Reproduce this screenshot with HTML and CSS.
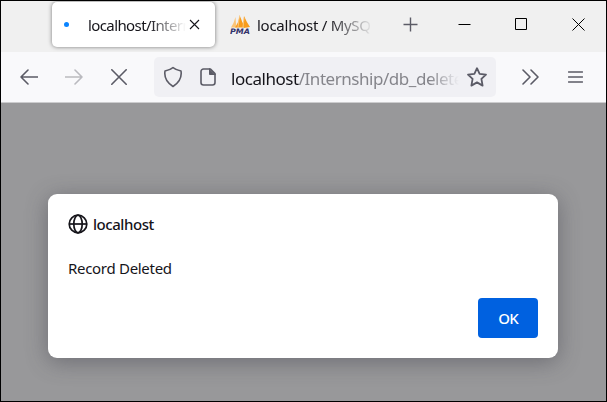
FILE: index.html
```html
<!DOCTYPE html>
<html lang="en">
<head>
<meta charset="utf-8">
<title>localhost</title>
<link rel="stylesheet" href="styles.css">
</head>
<body>
<div class="window">
  <header class="tabbar">
    <div class="tab tab-active">
      <span class="loading"></span>
      <span class="tab-title title-active">localhost/Intern</span>
      <svg class="tab-close" width="11" height="11" viewBox="0 0 11 11"><path d="M1 1l9 9M10 1l-9 9"/></svg>
    </div>
    <div class="tab tab-idle">
      <svg class="pma" width="21" height="20" viewBox="0 0 21 20">
        <path class="sail-light" d="M1 12.500Q4 8 5.500 2Q5.500 8 7 12.500Z"/>
        <path class="sail" d="M5 12.500Q9 7 9.500 0Q12 5 13.500 12.500Z"/>
        <path class="sail" d="M11.500 10Q14 6 14 1Q17 8 20 12L14 13Z"/>
        <path class="sail-gap" d="M9.500 1L8 12M14 3L13 12"/>
        <text x="0" y="19.300" textLength="20" lengthAdjust="spacingAndGlyphs">PMA</text>
      </svg>
      <span class="tab-title title-idle">localhost / MySQ</span>
    </div>
    <svg class="new-tab" width="16" height="16" viewBox="0 0 16 16"><path d="M7.500 .5v14M.5 7.500h14"/></svg>
    <div class="controls">
      <svg width="13" height="13" viewBox="0 0 13 13"><path d="M.5 6.500h12"/></svg>
      <svg width="13" height="13" viewBox="0 0 13 13"><path d="M.5 .5h11v11H.5z"/></svg>
      <svg width="13" height="13" viewBox="0 0 13 13"><path d="M.5 .5l12 12M12.500 .5l-12 12"/></svg>
    </div>
  </header>
  <nav class="toolbar">
    <svg class="icon back" width="18" height="16" viewBox="0 0 18 16"><path d="M17.500 8H1M8 1L1 8l7 7"/></svg>
    <svg class="icon forward" width="18" height="16" viewBox="0 0 18 16"><path d="M.5 8H17M10 1l7 7-7 7"/></svg>
    <svg class="icon stop" width="16" height="16" viewBox="0 0 16 16"><path d="M.8 .8l14.400 14.400M15.200 .8L.8 15.200"/></svg>
    <div class="address">
      <svg class="icon shield" width="20" height="22" viewBox="0 0 20 22"><path d="M10 1.500Q12 3.300 18 5Q19.500 14.500 10 20.500Q.5 14.500 2 5Q8 3.300 10 1.500Z"/></svg>
      <svg class="icon page" width="16" height="18" viewBox="0 0 16 18"><path d="M3.500 1h7L15 5.500v9a2.500 2.500 0 0 1-2.500 2.500h-9A2.500 2.500 0 0 1 1 14.500v-11A2.500 2.500 0 0 1 3.500 1z"/><path class="fold" d="M9.500 1v5.500H15z"/></svg>
      <div class="url"><span class="host">localhost</span><span class="path">/Internship/db_delete</span></div>
      <svg class="icon star" width="22" height="20" viewBox="0 0 22 20"><path d="M11 1.200l2.600 5.700 6.400.8-4.600 4.200 1.200 6.700L11 15.400l-5.600 3.200 1.200-6.700L2 7.700l6.400-.8z"/></svg>
    </div>
    <svg class="icon more" width="17" height="16" viewBox="0 0 17 16"><path d="M1 1l7 7-7 7M9 1l7 7-7 7"/></svg>
    <svg class="icon menu" width="15" height="12" viewBox="0 0 15 12"><path d="M.5 1h14M.5 6h14M.5 11h14"/></svg>
  </nav>
  <main class="page-area">
    <section class="dialog" role="alertdialog">
      <div class="origin">
        <svg width="20" height="20" viewBox="0 0 20 20"><circle cx="10" cy="10" r="8.800"/><ellipse cx="10" cy="10" rx="4.200" ry="8.800"/><path d="M1.200 10h17.600"/></svg>
        <span class="origin-name">localhost</span>
      </div>
      <p class="message">Record Deleted</p>
      <button class="ok">OK</button>
    </section>
  </main>
</div>
</body>
</html>
```
FILE: styles.css
```css
* { box-sizing: border-box; }
body {
  margin: 0;
  overflow: hidden;
  font-family: "Noto Sans", "Open Sans", sans-serif;
  color: #15141a;
}
svg { display: block; flex: none; fill: none; }
.window {
  width: 607px;
  height: 402px;
  display: flex;
  flex-direction: column;
  border: 1px solid #000;
}
.tabbar {
  height: 51px;
  flex: none;
  display: flex;
  align-items: flex-start;
  background: #f0f0f0;
}
.tab { display: flex; align-items: center; height: 45px; margin-top: 1px; }
.tab-active {
  width: 163px;
  margin-left: 51px;
  padding-left: 12px;
  background: #fff;
  border-radius: 5px;
  box-shadow: 0 0 4px rgba(0, 0, 0, .5);
}
.loading { width: 5px; height: 5px; border-radius: 50%; background: #0a84ff; }
.tab-title {
  white-space: nowrap;
  font-size: 15px;
  line-height: 24px;
}
.title-active {
  width: 98px;
  margin-left: 19px;
  letter-spacing: -.6px;
  -webkit-mask-image: linear-gradient(to right, #000 62%, transparent);
  mask-image: linear-gradient(to right, #000 62%, transparent);
}
.tab-close { margin-left: 3px; stroke: #15141a; stroke-width: 1.1; }
.tab-idle { width: 161px; padding-left: 15px; }
.title-idle {
  width: 116px;
  margin-left: 6px;
  letter-spacing: -.26px;
  -webkit-mask-image: linear-gradient(to right, #000 62%, transparent);
  mask-image: linear-gradient(to right, #000 62%, transparent);
}
.pma .sail { fill: #f89c1c; }
.pma .sail-light { fill: #fbc477; }
.pma .sail-gap { stroke: #fbd7a3; stroke-width: .7; }
.pma text { fill: #33336b; font: italic bold 7.5px "DejaVu Sans", sans-serif; }
.new-tab { margin: 16px 0 0 27px; stroke: #5b5b66; stroke-width: 1.4; }
.controls {
  display: flex;
  gap: 44px;
  margin: 17px 0 0 39px;
  stroke: #000;
  stroke-width: 1;
}
.toolbar {
  height: 51px;
  flex: none;
  display: flex;
  align-items: center;
  padding-left: 19px;
  background: #f9f9fb;
  border-bottom: 1px solid #ccccce;
}
.icon { stroke: #5b5b66; stroke-width: 1.6; stroke-linecap: round; stroke-linejoin: round; }
.forward { margin-left: 27px; stroke: #bababf; }
.stop { margin-left: 28px; }
.address {
  width: 342px;
  height: 40px;
  margin-left: 27px;
  padding-left: 9px;
  display: flex;
  align-items: center;
  background: #f0f0f4;
  border-radius: 5px;
}
.page { margin-left: 17px; }
.page .fold { fill: #5b5b66; stroke-width: 1; }
.url {
  width: 228px;
  height: 26px;
  margin: 5px 0 0 15px;
  white-space: nowrap;
  font-size: 17px;
  line-height: 24px;
  letter-spacing: -.46px;
  -webkit-mask-image: linear-gradient(to right, #000 87%, transparent);
  mask-image: linear-gradient(to right, #000 87%, transparent);
}
.path { color: #85858b; }
.star { margin-left: 7px; stroke-width: 1.8; }
.more { margin-left: 26px; }
.menu { margin-left: 29px; stroke-width: 1.4; }
.page-area {
  flex: 1;
  padding: 91px 0 0 47px;
  background: #98989a;
  overflow: hidden;
}
.dialog {
  width: 510px;
  height: 164px;
  padding: 20px 20px 20px;
  display: flex;
  flex-direction: column;
  background: #fff;
  border-radius: 9px;
  box-shadow: 0 4px 22px rgba(58, 57, 68, .45);
}
.origin { display: flex; align-items: center; height: 20px; gap: 5px; stroke: #15141a; stroke-width: 1.7; }
.origin-name { font-size: 15px; font-weight: 500; line-height: 20px; letter-spacing: -.45px; stroke: none; }
.message { margin: 24px 0 0; font-size: 15px; line-height: 20px; letter-spacing: -.3px; }
.ok {
  width: 60px;
  height: 40px;
  margin: auto 0 0 auto;
  padding: 0;
  border: 0;
  border-radius: 4px;
  background: #0061e0;
  color: #fff;
  font: 500 15px "Noto Sans", sans-serif;
  letter-spacing: -.8px;
}
```
